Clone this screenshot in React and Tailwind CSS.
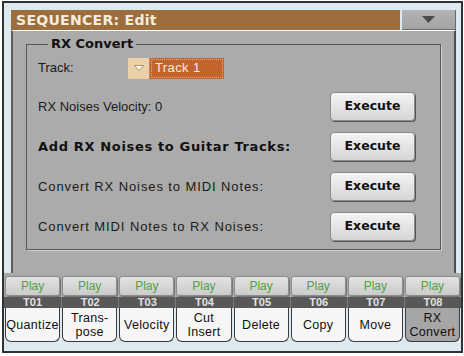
import React from "react";

const rows = [
  { label: "RX Noises Velocity: 0", cls: "font-['Liberation_Sans',sans-serif] text-[13px] text-[#1a1a1a]" },
  { label: "Add RX Noises to Guitar Tracks:", cls: "font-['DejaVu_Sans',sans-serif] font-bold text-[13px] tracking-[0.65px] text-[#111]" },
  { label: "Convert RX Noises to MIDI Notes:", cls: "font-['Liberation_Sans',sans-serif] text-[13px] tracking-[0.9px] text-[#1a1a1a]" },
  { label: "Convert MIDI Notes to RX Noises:", cls: "font-['Liberation_Sans',sans-serif] text-[13px] tracking-[0.9px] text-[#1a1a1a]" },
];

const tabs = [
  ["Quantize"],
  ["Trans-", "pose"],
  ["Velocity"],
  ["Cut", "Insert"],
  ["Delete"],
  ["Copy"],
  ["Move"],
  ["RX", "Convert"],
];

function ExecuteButton() {
  return (
    <div className="w-[85px] h-[29px] rounded-[4px] border border-[#8a8a8a] bg-gradient-to-b from-[#f4f4f4] to-[#d6d6d6] shadow-[1px_1px_0_#555] flex items-center justify-center font-['DejaVu_Sans',sans-serif] font-bold text-[12.5px] text-[#111]">
      Execute
    </div>
  );
}

export default function App() {
  return (
    <div className="w-[464px] h-[356px] bg-white overflow-hidden">
      <div className="mt-[1px] ml-[2px] w-[461px] h-[352px] border-2 border-[#2e3336] bg-[#dde9ee] flex flex-col">
        {/* Title row */}
        <div className="mt-[7px] ml-[7px] flex h-[20px]">
          <div className="w-[389px] h-full bg-[#9c6e3e] flex items-center pl-[5px] font-['DejaVu_Sans',sans-serif] font-bold text-[14px] tracking-[0.3px] text-[#f4ecdc]">
            SEQUENCER: Edit
          </div>
          <div className="ml-[2px] w-[54px] h-full bg-gradient-to-b from-[#b4b4b4] to-[#a2a2a2] border-r border-b border-[#6a6a6a] flex items-center justify-center">
            <svg width="13" height="7" viewBox="0 0 13 7">
              <polygon points="0,0 13,0 6.5,7" fill="#4a4a4a" />
            </svg>
          </div>
        </div>

        {/* Main panel */}
        <div className="ml-[7px] w-[445px] h-[243px] bg-[#ababab] border-t border-t-white border-l-2 border-r-2 border-l-[#5e5e5e] border-r-[#4e4e4e]">
          <fieldset className="ml-[13px] mt-[6px] w-[415px] border border-[#5a5a5a] shadow-[1px_1px_0_#cfcfcf] pl-[11px] pr-[25px] pb-[8px]">
            <legend className="ml-[10px] px-[3px] h-[14px] leading-[14px] font-['DejaVu_Sans',sans-serif] font-bold text-[13px] text-[#111]">
              RX Convert
            </legend>
            <div className="mt-[6px] flex items-center h-[22px]">
              <span className="w-[90px] font-['Liberation_Sans',sans-serif] text-[13px] text-[#1a1a1a]">Track:</span>
              <div className="flex h-[21px]">
                <div className="w-[22px] h-full bg-[#ecd0a8] flex items-center justify-center border-r border-[#b88a60]">
                  <svg width="10" height="6" viewBox="0 0 10 6">
                    <polygon points="0.5,0.5 9.5,0.5 5,5.5" fill="#ffffff" stroke="#a87850" strokeWidth="0.8" />
                  </svg>
                </div>
                <div className="w-[74px] h-full bg-[#c2652d] p-[1px]">
                  <div className="w-full h-full border border-dotted border-[#e9a878] flex items-center pl-[3px] font-['Liberation_Sans',sans-serif] text-[13px] tracking-[0.4px] text-[#fbead6]">
                    Track 1
                  </div>
                </div>
              </div>
            </div>
            <div className="mt-[13px] flex flex-col gap-[11px]">
              {rows.map((r, i) => (
                <div key={i} className="flex items-center justify-between h-[29px]">
                  <span className={"whitespace-pre " + r.cls}>{r.label}</span>
                  <ExecuteButton />
                </div>
              ))}
            </div>
          </fieldset>
        </div>

        {/* Play row */}
        <div className="h-[24px] bg-[#a9a9a9] grid grid-cols-8 pt-[3px] pb-[1px]">
          {tabs.map((_, i) => (
            <div key={i} className="px-[1px]">
              <div className="h-full rounded-[3px] border border-[#8c8c8c] bg-gradient-to-b from-[#e2e2e2] to-[#cbcbcb] shadow-[1px_1px_0_#777] flex items-center justify-center font-['Liberation_Sans',sans-serif] text-[12px] text-[#52a046]">
                Play
              </div>
            </div>
          ))}
        </div>

        {/* Track strip */}
        <div className="h-[11px] bg-[#585858] grid grid-cols-8">
          {tabs.map((_, i) => (
            <div key={i} className={"flex items-center justify-center font-['Liberation_Sans',sans-serif] font-bold text-[11px] leading-none text-[#e2e2e2] " + (i > 0 ? "border-l border-[#7a7a7a]" : "")}>
              {"T0" + (i + 1)}
            </div>
          ))}
        </div>

        {/* Tabs */}
        <div className="h-[34px] grid grid-cols-8">
          {tabs.map((t, i) => (
            <div key={i} className="px-[1px] h-full">
              <div
                className={
                  "h-full rounded-b-[6px] border-l border-r border-b border-[#3a3a3a] flex flex-col items-center justify-center font-['Liberation_Sans',sans-serif] text-[12.5px] leading-[14px] tracking-[0.3px] text-[#111] " +
                  (i === 7 ? "bg-[#a6a6a6]" : "bg-[#f6f6f6]")
                }
              >
                {t.map((line, j) => (
                  <span key={j} className="whitespace-nowrap">{line}</span>
                ))}
              </div>
            </div>
          ))}
        </div>
      </div>
    </div>
  );
}
